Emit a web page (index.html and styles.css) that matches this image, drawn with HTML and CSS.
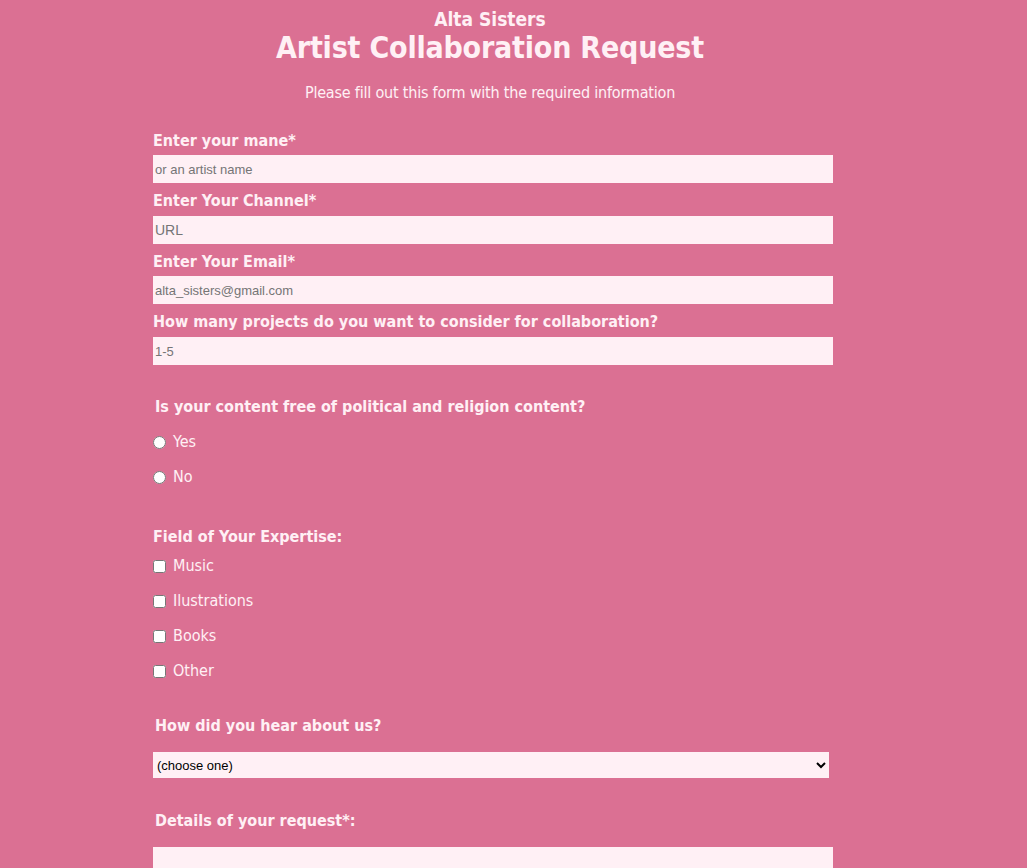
FILE: index.html
```html
<!DOCTYPE html>
<html>
<head>
<meta charset="utf-8">
<link rel="stylesheet" href="styles.css">
</head>
<body>
<header class="head">
  <h2 class="brand">Alta Sisters</h2>
  <h1 class="title">Artist Collaboration Request</h1>
  <p class="intro">Please fill out this form with the required information</p>
</header>
<form class="form">
  <label class="lbl">Enter your mane*</label>
  <input class="txt" type="text" placeholder="or an artist name">
  <label class="lbl">Enter Your Channel*</label>
  <input class="txt big" type="text" placeholder="URL">
  <label class="lbl">Enter Your Email*</label>
  <input class="txt" type="email" placeholder="alta_sisters@gmail.com">
  <label class="lbl">How many projects do you want to consider for collaboration?</label>
  <input class="txt" type="text" placeholder="1-5">

  <p class="q q-radio">Is your content free of political and religion content?</p>
  <label class="opt"><input type="radio" name="free"> Yes</label>
  <label class="opt"><input type="radio" name="free"> No</label>

  <p class="q q-field">Field of Your Expertise:</p>
  <label class="opt"><input type="checkbox"> Music</label>
  <label class="opt"><input type="checkbox"> Ilustrations</label>
  <label class="opt"><input type="checkbox"> Books</label>
  <label class="opt"><input type="checkbox"> Other</label>

  <p class="q q-hear">How did you hear about us?</p>
  <select class="sel">
    <option>(choose one)</option>
  </select>

  <p class="q q-details">Details of your request*:</p>
  <textarea class="area"></textarea>
</form>
</body>
</html>
```
FILE: styles.css
```css
html, body {
  margin: 0;
  padding: 0;
  background: #db7093;
}
body {
  color: #fff0f5;
  font-family: "DejaVu Sans Condensed", "DejaVu Sans", sans-serif;
}
.head {
  width: 680px;
  margin: 0 auto 0 150px;
  text-align: center;
}
.brand {
  margin: 0;
  padding-top: 8px;
  font-size: 19px;
  line-height: 22px;
  font-weight: bold;
}
.title {
  margin: 0;
  font-size: 30px;
  line-height: 36px;
  font-weight: bold;
  letter-spacing: -0.2px;
}
.intro {
  margin: 17px 0 0;
  font-size: 16px;
  line-height: 20px;
  letter-spacing: -0.2px;
}
.form {
  display: flex;
  flex-direction: column;
  align-items: flex-start;
  width: 680px;
  margin: 27px 0 0 153px;
}
.lbl {
  display: block;
  font-size: 16px;
  font-weight: bold;
  line-height: 21.7px;
  margin: 7px 0 4px;
}
.lbl:first-child { margin-top: 0; line-height: 21px; }
.txt {
  box-sizing: border-box;
  width: 680px;
  height: 28px;
  border: none;
  padding: 0 2px;
  background: #fff0f5;
  font-family: "Liberation Sans", Arial, sans-serif;
  font-size: 13px;
  color: #555;
}
.txt.big { font-size: 14px; }
.txt::placeholder { color: #757575; }
.q {
  margin: 0;
  font-size: 16px;
  font-weight: bold;
  line-height: 20px;
}
.q-radio { margin: 32px 0 0 2px; }
.q-field { margin: 40px 0 0 0; }
.q-hear { margin: 35px 0 0 2px; }
.q-details { margin: 33px 0 0 2px; }
.opt {
  display: flex;
  align-items: center;
  font-size: 16px;
  line-height: 20px;
  margin-top: 15px;
}
.q-field + .opt { margin-top: 9px; }
.opt input {
  margin: 0 7px 0 0;
  width: 13px;
  height: 13px;
}
.sel {
  margin-top: 16px;
  width: 676px;
  height: 26px;
  border: none;
  background: #fff0f5;
  font-family: "Liberation Sans", Arial, sans-serif;
  font-size: 13px;
  color: #000;
  padding: 0;
}
.area {
  box-sizing: border-box;
  margin-top: 16px;
  width: 680px;
  height: 80px;
  border: none;
  background: #fff0f5;
  resize: none;
}
```
